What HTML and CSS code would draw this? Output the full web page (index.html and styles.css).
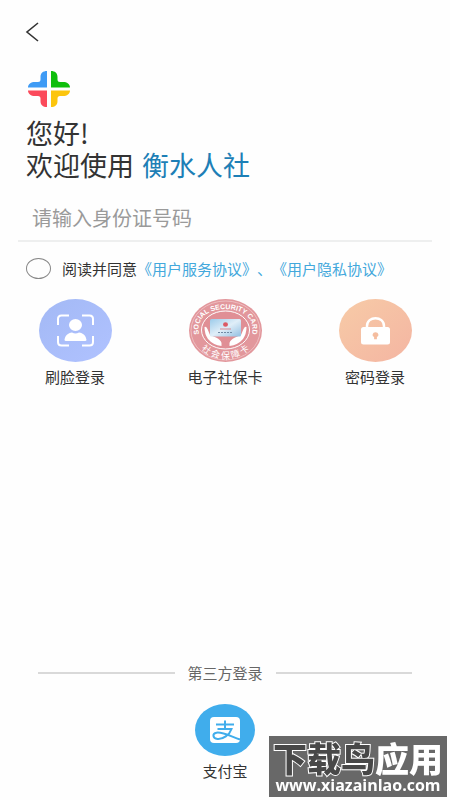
FILE: index.html
```html
<!DOCTYPE html>
<html lang="zh-CN">
<head>
<meta charset="utf-8">
<meta name="viewport" content="width=device-width, initial-scale=1">
<title>登录</title>
<link rel="stylesheet" href="styles.css">
</head>
<body>
<main class="page">
  <button class="back" type="button" aria-label="返回">
    <svg width="14" height="20" viewBox="0 0 14 20"><path d="M13 1 L2 10 L13 19" fill="none" stroke="#333" stroke-width="1.6"/></svg>
  </button>

  <svg class="logo" width="42" height="36" viewBox="0 0 42 36" aria-hidden="true">
    <path fill="#3e9bf5" d="M19 0V16.500H0C0 13 3 11 7 11H10Q12.500 11 12.500 8.500V6C12.500 2 15 0 19 0Z"/>
    <path fill="#0fbe0c" d="M23 0V16.500H42C42 13 39 11 35 11H32Q29.500 11 29.500 8.500V6C29.500 2 27 0 23 0Z"/>
    <path fill="#fb4a5b" d="M19 36V19.500H0C0 23 3 25 7 25H10Q12.500 25 12.500 27.500V30C12.500 34 15 36 19 36Z"/>
    <path fill="#fcc50d" d="M23 36V19.500H42C42 23 39 25 35 25H32Q29.500 25 29.500 27.500V30C29.500 34 27 36 23 36Z"/>
  </svg>

  <h1 class="title">您好!<br>欢迎使用 <span class="brand">衡水人社</span></h1>

  <form class="form">
    <input class="id-input" type="text" aria-label="身份证号码" placeholder="请输入身份证号码">
    <div class="agree">
      <input class="agree-radio" id="agree" type="radio">
      <p class="agree-text"><label for="agree">阅读并同意</label><a href="#service">《用户服务协议》</a><a href="#privacy">、《用户隐私协议》</a></p>
    </div>
  </form>

  <div class="methods">
    <button class="method" type="button">
      <svg width="73" height="63" viewBox="0 0 73 63" aria-hidden="true">
        <defs><linearGradient id="blue" x1="0" y1="0" x2="1" y2="1"><stop offset="0" stop-color="#a3b9f5"/><stop offset="1" stop-color="#b0c2ff"/></linearGradient></defs>
        <ellipse cx="36.500" cy="31.500" rx="36.500" ry="31.500" fill="url(#blue)"/>
        <path d="M19 26V20Q19 16.500 22.500 16.500H30M43 16.500H50.500Q54 16.500 54 20V26M54 37V43Q54 46.500 50.500 46.500H43M30 46.500H22.500Q19 46.500 19 43V37" fill="none" stroke="#fff" stroke-width="2"/>
        <ellipse cx="36.500" cy="26" rx="6.500" ry="6" fill="#fff"/>
        <path d="M25.500 41C26 36.500 29 34 33 33.500Q36.500 35.500 40 33.500C44 34 47 36.500 47.500 41Q47.500 42 46 42H27Q25.500 42 25.500 41Z" fill="#fff"/>
      </svg>
      <span>刷脸登录</span>
    </button>
    <button class="method" type="button">
      <svg width="73" height="63" viewBox="0 0 73 63" aria-hidden="true">
        <defs>
          <path id="arc-top" d="M11 38C5 21 18 10 36.500 10S68 21 62 38"/>
          <path id="arc-bottom" d="M6 41C17 66 56 66 67 41"/>
          <linearGradient id="card" x1="0" y1="0" x2="1" y2="1"><stop offset="0" stop-color="#9ccbea"/><stop offset=".5" stop-color="#e0eef8"/><stop offset="1" stop-color="#91bfe2"/></linearGradient>
        </defs>
        <ellipse cx="36.500" cy="31.500" rx="36.500" ry="31.500" fill="#e2979c"/>
        <ellipse cx="36.500" cy="31.500" rx="34.500" ry="29.500" fill="none" stroke="#f0c5c8" stroke-width=".8"/>
        <ellipse cx="36.500" cy="31" rx="24" ry="19" fill="#e08f95" stroke="#fff" stroke-width="1"/>
        <text class="seal-en"><textPath href="#arc-top" startOffset="50%">SOCIAL SECURITY CARD</textPath></text>
        <text class="seal-cn"><textPath href="#arc-bottom" startOffset="50%">社 会 保 障 卡</textPath></text>
        <path d="M15.500 28Q17 27 18.500 30L21 36L27 38.500Q32 41 32.500 44V47Q24 46 19 40Q15.500 35 15.500 28ZM57.500 28Q56 27 54.500 30L52 36L46 38.500Q41 41 40.500 44V47Q49 46 54 40Q57.500 35 57.500 28Z" fill="#fff"/>
        <rect x="21" y="20" width="31" height="17.500" rx="1.500" fill="url(#card)"/>
        <ellipse cx="36.500" cy="25.500" rx="2.500" ry="2.200" fill="#dc5964"/>
        <path d="M31 30H42" stroke="#d88791" stroke-width="1"/>
        <path d="M29 33.500H44" stroke="#718ba5" stroke-width="1" stroke-dasharray="2 1"/>
      </svg>
      <span>电子社保卡</span>
    </button>
    <button class="method" type="button">
      <svg width="73" height="63" viewBox="0 0 73 63" aria-hidden="true">
        <defs><linearGradient id="peach" x1="0" y1="0" x2="1" y2="1"><stop offset="0" stop-color="#f7cba7"/><stop offset="1" stop-color="#f4b5a2"/></linearGradient></defs>
        <ellipse cx="36.500" cy="31.500" rx="36.500" ry="31.500" fill="url(#peach)"/>
        <path d="M28 30V27C28 16.500 45 16.500 45 27V30" fill="none" stroke="#fff" stroke-width="2.500"/>
        <rect x="22" y="28" width="29" height="17.500" rx="2.500" fill="#fff"/>
        <path d="M36.500 33.200a2.900 2.600 0 0 1 1.400 4.900V40.200h-2.800V38.100a2.900 2.600 0 0 1 1.400-4.900Z" fill="#f5bd9f"/>
      </svg>
      <span>密码登录</span>
    </button>
  </div>

  <section class="third">
    <h2 class="divider">第三方登录</h2>
    <button class="method" type="button">
      <svg width="60" height="52" viewBox="0 0 60 52" aria-hidden="true">
        <ellipse cx="30" cy="26" rx="30" ry="26" fill="#40adec"/>
        <rect x="15" y="13" width="30" height="26" rx="4" fill="#fff"/>
        <path d="M21 20.500H39M30 16.500V25M22.500 25H36.500C34.500 31 28 35.500 22.500 35C17.500 34.500 17 29.500 21.500 28.700C27 27.700 35 32 45 35.500" fill="none" stroke="#40adec" stroke-width="2"/>
      </svg>
      <span>支付宝</span>
    </button>
  </section>
</main>

<aside class="watermark">
  <p class="mark-name"><span class="mark-dark">下载鸟</span>应用</p>
  <p class="mark-url">www.xiazainlao.com</p>
</aside>
</body>
</html>
```
FILE: styles.css
```css
* {
  box-sizing: border-box;
}

body {
  margin: 0;
  background: #fefefe;
  color: #333;
  font-family: "Noto Sans CJK SC", sans-serif;
  font-size: 15px;
  line-height: 20px;
  text-spacing-trim: space-all;
}

button {
  padding: 0;
  border: 0;
  background: none;
  color: inherit;
  font: inherit;
  cursor: pointer;
}

svg {
  display: block;
}

a {
  color: #43a8dc;
  text-decoration: none;
}

p {
  margin: 0;
}

.page {
  display: flex;
  flex-direction: column;
  min-height: 100vh;
  padding: 22px 18px 19px;
}

.back {
  align-self: flex-start;
  margin-left: 7px;
}

.logo {
  margin: 29px 0 0 10px;
}

.title {
  margin: 10px 0 0 8px;
  font-size: 27px;
  font-weight: 400;
  line-height: 32px;
}

.brand {
  margin-left: 2px;
  color: #1d7fb6;
}

.id-input {
  display: block;
  width: 100%;
  height: 61px;
  padding: 14px 14px 0;
  border: 0;
  border-bottom: 2px solid #eeefef;
  background: none;
  color: #333;
  font: inherit;
  font-size: 20px;
  outline: none;
}

.id-input::placeholder {
  color: #9a9a9a;
}

.agree {
  display: flex;
  align-items: center;
  gap: 11px;
  margin-top: 16px;
  padding-left: 8px;
}

.agree-radio {
  appearance: none;
  flex: none;
  width: 25px;
  height: 21px;
  margin: 0;
  border: 1px solid #888;
  border-radius: 50%;
}

.agree-radio:checked {
  background: #43a8dc;
}

.agree-text {
  font-kerning: none;
  white-space: nowrap;
}

.methods {
  display: grid;
  grid-template-columns: repeat(3, 1fr);
  margin: 20px -18px 0;
}

.method {
  display: flex;
  flex-direction: column;
  align-items: center;
  gap: 5px;
}

.seal-en {
  fill: #fff;
  font-family: "Liberation Sans", sans-serif;
  font-size: 7px;
  font-weight: 700;
  text-anchor: middle;
}

.seal-cn {
  fill: #fff;
  font-size: 9px;
  text-anchor: middle;
}

.third {
  display: flex;
  flex-direction: column;
  align-items: center;
  gap: 21px;
  margin-top: auto;
  padding: 0 20px;
}

.divider {
  display: flex;
  align-items: center;
  gap: 13px;
  width: 100%;
  margin: 0;
  color: #666;
  font-size: 15px;
  font-weight: 400;
}

.divider::before,
.divider::after {
  content: "";
  flex: 1;
  height: 2px;
  background: #d9d9d9;
}

.watermark {
  position: fixed;
  right: 3px;
  bottom: 3px;
  padding: 4px 4px 3px;
  background: #686868;
  color: #fff;
  text-align: center;
}

.mark-name {
  font-size: 34px;
  font-weight: 900;
  line-height: 36px;
}

.mark-dark {
  color: #484848;
  paint-order: stroke fill;
  -webkit-text-stroke: 2px #fff;
}

.mark-url {
  font-family: "Open Sans", sans-serif;
  font-size: 16px;
  font-weight: 700;
  line-height: 18px;
}
```
